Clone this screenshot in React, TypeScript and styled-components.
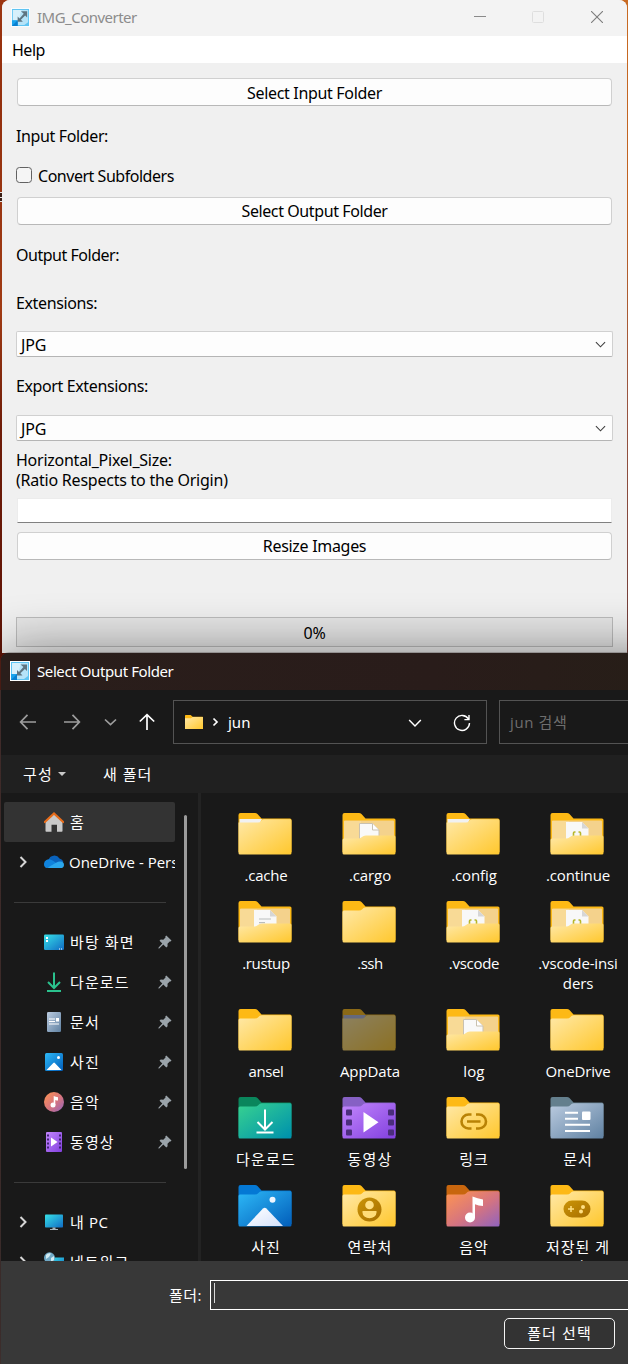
import React from "react";
import styled, { createGlobalStyle } from "styled-components";

const GlobalStyle = createGlobalStyle`
  * { box-sizing: border-box; }
  html, body { margin: 0; padding: 0; }
  body { width: 628px; height: 1364px; overflow: hidden; background: #5a3029; }
`;

const segoe = `"Noto Sans", "Noto Sans CJK KR", sans-serif`;
const malgun = `"Open Sans", "Noto Sans CJK KR", sans-serif`;

/* ---------- desktop ---------- */

const Desktop = styled.main`
  width: 628px;
  height: 1364px;
  overflow: hidden;
  display: flex;
  flex-direction: column;
  background:
    linear-gradient(#c86a22, #c0601f 30%, #9a5540 60%, #6d3a38 100%) right top / 10px 660px no-repeat,
    linear-gradient(#e8e4e2 0 1px, #3a1d14 1px 5px, #e8e4e2 5px 6px, #3a1d14 6px 9px, #e8e4e2 9px) 0 192px / 2px 10px no-repeat,
    linear-gradient(#9c3510, #93300e 15%, #a03b14 45%, #6e1c08 62%, #5c1206 100%) left top / 10px 690px no-repeat,
    linear-gradient(#5e2f2a, #45302e);
`;

const Label = styled.span<{ $ls?: number }>`
  letter-spacing: ${(p) => p.$ls ?? 0}px;
  white-space: nowrap;
`;

/* ---------- converter window ---------- */

const ConverterWindow = styled.section`
  width: 625px;
  height: 653px;
  margin-left: 2px;
  flex: none;
  display: flex;
  flex-direction: column;
  border-radius: 8px 8px 0 0;
  overflow: hidden;
  background: #f0f0f0;
  color: #000;
  font: 16px/20px ${segoe};
`;

const TitleBar = styled.header`
  height: 36px;
  flex: none;
  display: flex;
  align-items: center;
  padding: 0 0 2px 9px;
  background: #f3f3f3;
  color: #8c8c8c;
  font-size: 15px;
`;

const TitleText = styled.span<{ $ls?: number }>`
  flex: 1;
  margin-left: 7px;
  letter-spacing: ${(p) => p.$ls ?? 0}px;
`;

const WindowControls = styled.div`
  display: flex;
  gap: 46px;
  padding-right: 24px;
  svg { display: block; }
  svg:last-child { margin-left: 1px; }
`;

const MenuBar = styled.nav`
  height: 27px;
  flex: none;
  padding: 4px 10px;
  background: #fff;
`;

const Form = styled.div`
  display: flex;
  flex-direction: column;
  padding: 15px 14px 0;
`;

const PushButton = styled.button<{ $top?: number; $drop?: number }>`
  height: 28px;
  margin: ${(p) => p.$top ?? 0}px 1px 0;
  padding: ${(p) => p.$drop ?? 0}px 0 ${(p) => (p.$drop ? 0 : 1)}px;
  border: 1px solid #d0d0d0;
  border-bottom-color: #b8b8b8;
  border-radius: 4px;
  background: #fdfdfd;
  color: #000;
  font: inherit;
`;

const FieldLabel = styled.label<{ $top: number; $ls?: number }>`
  height: 20px;
  margin-top: ${(p) => p.$top}px;
  letter-spacing: ${(p) => p.$ls ?? 0}px;
  white-space: nowrap;
`;

const CheckRow = styled.label`
  display: flex;
  align-items: center;
  gap: 6px;
  height: 20px;
  margin-top: 20px;
`;

const CheckBox = styled.span`
  width: 16px;
  height: 16px;
  margin-top: -2px;
  border: 1px solid #626262;
  border-radius: 3.5px;
  background: #f5f5f5;
`;

const Select = styled.div<{ $top: number }>`
  height: 26px;
  margin-top: ${(p) => p.$top}px;
  display: flex;
  align-items: center;
  justify-content: space-between;
  padding: 1px 6px 0 4px;
  border: 1px solid #d0d0d0;
  border-bottom-color: #b5b5b5;
  border-radius: 2px;
  background: #fdfdfd;
`;

const LineInput = styled.div`
  height: 25px;
  margin: 8px 1px 0;
  border: 1px solid #ececec;
  border-bottom-color: #808080;
  background: #fff;
`;

const Progress = styled.div`
  height: 30px;
  margin-top: 57px;
  padding-top: 5px;
  border: 1px solid #bcbcbc;
  background: #e6e6e6;
  text-align: center;
  letter-spacing: -0.3px;
`;

/* ---------- folder picker ---------- */

const Dialog = styled.section`
  position: relative;
  width: 720px;
  height: 711px;
  margin-left: 1px;
  flex: none;
  display: flex;
  flex-direction: column;
  border-radius: 8px 8px 0 0;
  background: #191919;
  box-shadow: 0 0 0 1px rgba(70, 60, 58, 0.3), 0 0 54px rgba(0, 0, 0, 0.48);
  color: #fff;
  font: 15px/20px ${malgun};
`;

const DialogTitle = styled.header`
  height: 37px;
  flex: none;
  display: flex;
  align-items: center;
  padding: 0 0 1px 9px;
  border-radius: 8px 8px 0 0;
  background: linear-gradient(90deg, #2a1e1b, #291c1a 60%, #271e18 90%);
  font-family: ${segoe};
`;

const NavBar = styled.div`
  height: 65px;
  flex: none;
  display: flex;
  align-items: center;
  padding: 0 0 2px 18px;
`;

const NavButtons = styled.div`
  width: 154px;
  flex: none;
  display: flex;
  svg { display: block; flex: none; }
`;

const AddressBox = styled.div`
  width: 314px;
  height: 44px;
  display: flex;
  align-items: center;
  padding: 0 15px 0 11px;
  border: 1px solid #535353;
  svg { display: block; }
`;

const AddressText = styled.span`
  flex: 1;
  margin-left: -1px;
  font-family: ${segoe};
`;

const AddressActions = styled.span`
  display: flex;
  align-items: center;
  gap: 31px;
  padding-top: 2px;
`;

const SearchBox = styled.div`
  width: 210px;
  height: 44px;
  margin-left: 12px;
  padding: 11px 10px;
  border: 1px solid #535353;
  color: #6e6e6e;
  letter-spacing: 0.6px;
`;

const ToolBar = styled.div`
  height: 38px;
  flex: none;
  display: flex;
  align-items: center;
  padding: 0 0 1px 22px;
  background: #202020;
`;

const Caret = styled.i`
  margin: 0 37px 0 5px;
  border: 4.5px solid transparent;
  border-top-color: #c8c8c8;
  border-bottom: 0;
`;

const Content = styled.div`
  height: 468px;
  flex: none;
  display: flex;
  overflow: hidden;
`;

const Sidebar = styled.aside`
  width: 174px;
  padding: 9px 0 0 3px;
  overflow: hidden;
  flex: none;
`;

const SideRow = styled.div<{ $active?: boolean }>`
  height: 40px;
  display: flex;
  align-items: center;
  border-radius: 2px;
  background: ${(p) => (p.$active ? "#333" : "transparent")};
  svg { display: block; flex: none; }
`;

const ExpandSlot = styled.span`
  width: 40px;
  flex: none;
  padding-left: 13px;
`;

const SideText = styled.span<{ $ls?: number; $gap?: number }>`
  flex: 1;
  margin-left: ${(p) => p.$gap ?? 6}px;
  white-space: nowrap;
  letter-spacing: ${(p) => p.$ls ?? 0}px;
`;

const SideDivider = styled.hr`
  width: 152px;
  height: 1px;
  margin: 20px 0 19px 10px;
  border: 0;
  background: #3a3a3a;
`;

const ScrollTrack = styled.div`
  width: 23px;
  flex: none;
  padding: 22px 0 0 9px;
`;

const ScrollThumb = styled.div`
  width: 3px;
  height: 354px;
  border-radius: 2px;
  background: #9b9b9b;
`;

const Splitter = styled.div`
  width: 3px;
  flex: none;
  background: #232323;
`;

const FileGrid = styled.div`
  display: grid;
  grid-template-columns: repeat(4, 104px);
  align-content: start;
  padding: 20px 0 0 12px;
`;

const FileCell = styled.figure`
  margin: 0;
  padding-bottom: 16px;
  display: flex;
  flex-direction: column;
  align-items: center;
  text-align: center;
  svg { display: block; margin-bottom: 10px; }
`;

const FileName = styled.figcaption<{ $ls: number }>`
  white-space: pre;
  padding-left: 2px;
  letter-spacing: ${(p) => p.$ls}px;
`;

const Footer = styled.footer`
  flex: 1;
  background: #383838;
`;

const FolderRow = styled.div`
  display: flex;
  align-items: center;
  padding: 19px 0 0 168px;
`;

const FolderInput = styled.div`
  width: 500px;
  height: 30px;
  margin-left: 8px;
  padding: 2px 3px;
  border: 1px solid #fff;
`;

const TextCursor = styled.div`
  width: 1px;
  height: 20px;
  background: #d8d8d8;
`;

const ConfirmButton = styled.button`
  display: block;
  width: 111px;
  height: 31px;
  margin: 8px 0 0 503px;
  padding: 0 0 2px;
  border: 1px solid #f4f4f4;
  border-radius: 5px;
  background: #333;
  color: #fff;
  font: inherit;
  letter-spacing: 1.1px;
`;

/* ---------- icons ---------- */

const AppIcon = ({ size }: { size: number }) => (
  <svg width={size} height={size} viewBox="0 0 20 20">
    <rect width="20" height="20" fill="#fff" />
    <rect x="1" y="1" width="18" height="18" fill="#5fc4f2" />
    <path d="M2 2h16v13l-4 3H7V13H2z" fill="#b5e3f8" />
    <path d="M2 2h9L8 13H2z" fill="#d7f0fb" />
    <path d="M1 13h6v6H1z" fill="#1aa3ec" />
    <path d="M7 13v6L1 19z" fill="#087fd0" />
    <path d="M10.5 3.5H17V10l-2.1-2.1-4.5 4.4 2.1 2.2H7V9l2 2 4.4-5z" fill="#5e7480" />
  </svg>
);

const Chevron = ({ dir, size = 12, color = "#fff", w = 1.5 }: { dir: "down" | "right"; size?: number; color?: string; w?: number }) => (
  <svg width={size} height={size} viewBox="0 0 12 12" fill="none" stroke={color} strokeWidth={w}>
    <path d={dir === "down" ? "M1 3.5 6 8.5 11 3.5" : "M3.5 1 8.5 6 3.5 11"} />
  </svg>
);

const Arrow = ({ turn, color }: { turn: number; color: string }) => (
  <svg width="18" height="18" viewBox="0 0 18 18" fill="none" stroke={color} strokeWidth="1.7">
    <path transform={`rotate(${turn} 9 9)`} d="M17 9H1.800M8.500 1.800 1.600 9l6.900 7.200" />
  </svg>
);

const Refresh = () => (
  <svg width="18" height="18" viewBox="0 0 18 18" fill="none" stroke="#fff" strokeWidth="1.4">
    <path d="M15.4 5A7.5 7.5 0 1 0 16.5 9M16 1v4.6h-4.6" />
  </svg>
);

const Pin = () => (
  <svg width="14" height="14" viewBox="0 0 14 14" fill="#9aa3a9">
    <path d="M8.3.5 13.5 5.6l-1 .9-.8-.1-2.2 2.3.1 2.6-1.3 1.2-3-3L1.200 13.600.4 13.400.6 12.600 4.300 8.600 1.500 5.800l1.200-1.200 2.600.1L7.500 2.400l-.2-1z" />
  </svg>
);

const GradientSheet = styled.svg`
  position: absolute;
`;

const Gradients = () => (
  <GradientSheet width="0" height="0">
    <defs>
      {(
        [
          ["yellow", "#ffe7a2", "#ffc933"],
          ["green", "#35cf91", "#0093ac"],
          ["purple", "#bf83fb", "#8543e0"],
          ["slate", "#b7c8dd", "#6485a5"],
          ["blue", "#2bb4f4", "#0462bd"],
          ["teal", "#35dbe6", "#1271c6"],
          ["gold", "#c99207", "#a87000"],
          ["snow", "#ffffff", "#d5e2fb"],
        ] as const
      ).map(([id, a, b]) => (
        <linearGradient key={id} id={id} x1="0" y1="0" x2="1" y2="1">
          <stop offset="0.05" stopColor={a} />
          <stop offset="0.95" stopColor={b} />
        </linearGradient>
      ))}
      <linearGradient id="sunset" x1="0" y1="0" x2="1" y2="1">
        <stop offset="0" stopColor="#ff9550" />
        <stop offset="0.55" stopColor="#d57480" />
        <stop offset="1" stopColor="#9063bf" />
      </linearGradient>
    </defs>
  </GradientSheet>
);

type FolderKind =
  | "plain" | "strip" | "hidden" | "page" | "lines" | "code"
  | "download" | "video" | "link" | "docs" | "picture" | "contact" | "music" | "game";

const tones: Partial<Record<FolderKind, [string, string]>> = {
  download: ["#0a865c", "green"],
  video: ["#8660c4", "purple"],
  docs: ["#647f8d", "slate"],
  picture: ["#0478d4", "blue"],
  music: ["#c8660e", "sunset"],
};

const FolderArt = ({ kind }: { kind: FolderKind }) => {
  switch (kind) {
    case "download":
      return <path d="M27 12.500V33M19.500 25 27 32.500 34.500 25M18.500 35.500h17" stroke="#fff" strokeWidth="2" fill="none" />;
    case "video":
      return (
        <>
          {[13, 23, 33].map((y) => (
            <g key={y} fill="#4b2d7c">
              <rect x="4" y={y - 0.5} width="6" height="6" rx="1" />
              <rect x="46" y={y - 0.5} width="6" height="6" rx="1" />
            </g>
          ))}
          <path d="M21.500 15v20.500L36.500 25.200z" fill="#fff" />
        </>
      );
    case "link":
      return (
        <path d="M25.500 17.500H22.500a7 7 0 0 0 0 14h3M30 17.500h3a7 7 0 0 1 0 14h-3M21 24.500h13.500" fill="none" stroke="#b98205" strokeWidth="2.600" />
      );
    case "docs":
      return (
        <>
          <path d="M15 15.700h13M15 21.700h13M15 27.700h25M15 34h25" stroke="#fff" strokeWidth="2" />
          <rect x="32" y="14.500" width="8.500" height="8.500" rx="1" fill="#fff" />
        </>
      );
    case "picture":
      return (
        <>
          <path d="M8.500 41 25 23.500q1.700-1.700 3.400 0L45 41z" fill="url(#snow)" />
          <circle cx="34.500" cy="14.700" r="3" fill="#eef6ff" />
        </>
      );
    case "contact":
      return (
        <>
          <circle cx="27.500" cy="24.500" r="12" fill="url(#gold)" />
          <circle cx="27.500" cy="20" r="4.300" fill="#ffdf83" />
          <path d="M20.500 26h14v1.500a7 5.800 0 0 1-14 0z" fill="#ffdc78" />
        </>
      );
    case "music":
      return (
        <>
          <circle cx="24" cy="32.500" r="5" fill="#fff" />
          <path d="M26.500 11.500q5 2 10.500 3v6.500q-4.500-.3-8-1.700V33h-2.500z" fill="#fff" />
        </>
      );
    case "game":
      return (
        <>
          <rect x="13.500" y="15.500" width="27" height="17" rx="8.500" fill="url(#gold)" />
          <path d="M18 24h6M21 21v6" stroke="#ffdf83" strokeWidth="1.500" />
          <circle cx="33" cy="22" r="2" fill="#ffdf83" />
          <circle cx="31" cy="26.500" r="2" fill="#ffdf83" />
        </>
      );
    default:
      return null;
  }
};

const Folder = ({ kind }: { kind: FolderKind }) => {
  const [tab, body] = tones[kind] ?? ["#fdb915", "yellow"];
  const open = kind === "page" || kind === "lines" || kind === "code";
  const flat = kind === "strip" || kind === "hidden";
  return (
    <svg width="54" height="42" viewBox="0 0 54 42" opacity={kind === "hidden" ? 0.5 : 1}>
      <path d="M.5 2Q.5 0 2.500 0H17q1.500 0 2.500 1l4 4.600H52q1.500 0 1.500 1.500V39H.5z" fill={tab} />
      {open ? (
        <>
          <rect x="2" y="7.500" width="50" height="30" rx="1" fill="#f4d28c" />
          <path d="M2 8h17v20H2z" fill="#fadf9d" opacity=".6" />
          {kind === "page" ? (
            <path d="M17.500 10.500H30.500l6.500 6.500V28H17.500z" fill="#f9f9f9" stroke="#c9c1b0" />
          ) : (
            <path d="M16 9H32l6.500 6.500V28H16z" fill="#f8f8f8" />
          )}
          {kind === "page" ? (
            <path d="M30.500 10.500V17H37" fill="#fff" stroke="#c9c1b0" />
          ) : (
            <path d="M32 9v6.500h6.500z" fill="#d6d6d6" />
          )}
          {kind === "lines" && <path d="M21 18h12M21 21.700h6" stroke="#b9bdbd" strokeWidth="1.200" />}
          {kind === "code" && <path d="M25.500 19h-1q-1 0-1 1v4M28.500 19h1q1 0 1 1v4" stroke="#b6b62b" strokeWidth="1.600" fill="none" />}
          <path d="M.5 27q0-1.500 1.500-1.500H16q2 0 4-1.500l1.500-.9q1-.6 2.500-.6H52q1.500 0 1.500 1.500V40q0 1.500-1.500 1.500H2Q.5 41.500.5 40z" fill="url(#yellow)" />
        </>
      ) : flat ? (
        <>
          <path d="M1.500 6H24L21 12H1.500z" fill={kind === "hidden" ? "#aeb9e0" : "#f1f1f1"} />
          <path d="M.5 9.500H20q2 0 3-1.500 1-1.700 3-1.700H52q1.500 0 1.500 1.500V40q0 1.500-1.500 1.500H2Q.5 41.500.5 40z" fill={`url(#${body})`} />
        </>
      ) : (
        <path d="M.5 11q0-1.500 1.500-1.500H17q2 0 3.500-1.500l1-1q1-.8 2.500-.8H52q1.500 0 1.500 1.500V40q0 1.500-1.500 1.500H2Q.5 41.500.5 40z" fill={`url(#${body})`} />
      )}
      <FolderArt kind={kind} />
    </svg>
  );
};

type SideKind = "home" | "cloud" | "desktop" | "download" | "docs" | "picture" | "music" | "video" | "pc" | "network";

const SideArt: Record<SideKind, React.ReactNode> = {
  home: (
    <>
      <path d="M1.500 9.500 10 2l8.500 7.500V19q0 .8-.8.8H13v-7H7.500v7H2.300q-.8 0-.8-.8z" fill="#c9c9c9" />
      <path d="M.8 10 10 1.500 19.200 10" fill="none" stroke="#e66c1b" strokeWidth="2.200" strokeLinecap="round" />
    </>
  ),
  cloud: (
    <>
      <path d="M4.500 8a6 5.800 0 0 1 11-1.500q3 .5 4 3.500L10 13z" fill="#0a62bb" />
      <path d="M0 12.200A5 4.600 0 0 1 7.500 8q1.500.6 6 4L3 16Q0 15.500 0 12.200z" fill="#1083dd" />
      <path d="M3 16 12 10.700q2.500-1.500 4.500-1.300 3.500.4 3.500 3.500 0 3.100-3.500 3.100H4z" fill="#2aa7ee" />
    </>
  ),
  desktop: (
    <>
      <rect x="0" y="2.500" width="20" height="15.500" rx="1.200" fill="url(#teal)" />
      <path d="M2 5h2v2H2zM2 8h2v2H2z" fill="#fff" />
      <path d="M15 17h1M17 17h1" stroke="#fff" />
    </>
  ),
  download: <path d="M10 .5V15M4 10l6 6 6-6M3 19h14" fill="none" stroke="#2ac18d" strokeWidth="2" />,
  docs: (
    <>
      <rect x="3" y="0" width="14" height="20" rx="1.300" fill="url(#slate)" />
      <path d="M5 7h6M5 9.500h6M5 12h10" stroke="#fff" strokeWidth="1.200" />
      <rect x="12" y="6" width="3" height="3.500" fill="#fff" />
    </>
  ),
  picture: (
    <>
      <rect x="1" y="1" width="18" height="18" rx="1.500" fill="url(#blue)" />
      <path d="m2.500 18 6.800-7q.8-.8 1.500 0l6.700 7z" fill="#fff" />
      <circle cx="14.500" cy="5.500" r="1.500" fill="#fff" />
    </>
  ),
  music: (
    <>
      <circle cx="10" cy="10" r="10" fill="url(#sunset)" />
      <circle cx="9" cy="13" r="2.500" fill="#fff" />
      <path d="M9.700 4q2 1 4.300 1.200V8.500q-1.500 0-2.700-.6V13H9.700z" fill="#fff" />
    </>
  ),
  video: (
    <>
      <rect x="2" y="0" width="16" height="20" rx="1" fill="url(#purple)" />
      <path d="M4 2.500v16M16 2.500v16" stroke="#412373" strokeWidth="2" strokeDasharray="2 2" />
      <path d="M7 5.500v9L13.500 10z" fill="#fff" />
    </>
  ),
  pc: (
    <>
      <rect x="1" y="2.500" width="18" height="13" rx=".8" fill="url(#teal)" />
      <path d="M8.500 15.500h3V17H14v1H6v-1h2.500z" fill="#a8b4bb" />
    </>
  ),
  network: (
    <>
      <rect x="6" y="5.500" width="14" height="11" fill="url(#teal)" />
      <circle cx="5.500" cy="5.800" r="5.500" fill="#6fa9c6" />
      <path d="M2 3q2-2.500 5-1.500L5 5 2 7zM7 6l3-2v4l-3 2z" fill="#d1eaf2" />
    </>
  ),
};

const SideIcon = ({ kind }: { kind: SideKind }) => (
  <svg width="20" height="20" viewBox="0 0 20 20">{SideArt[kind]}</svg>
);

const PinSlot = styled.span`
  padding-right: 3px;
`;

/* ---------- data ---------- */

const pinned: [SideKind, string][] = [
  ["desktop", "바탕 화면"],
  ["download", "다운로드"],
  ["docs", "문서"],
  ["picture", "사진"],
  ["music", "음악"],
  ["video", "동영상"],
];

const files: [FolderKind, string, number][] = [
  ["strip", ".cache", -0.25],
  ["page", ".cargo", -0.1],
  ["strip", ".config", -0.1],
  ["code", ".continue", -0.15],
  ["lines", ".rustup", -0.4],
  ["plain", ".ssh", -0.5],
  ["code", ".vscode", -0.3],
  ["code", ".vscode-insi\nders", -0.15],
  ["plain", "ansel", -0.4],
  ["hidden", "AppData", -0.1],
  ["page", "log", 0.1],
  ["plain", "OneDrive", -0.15],
  ["download", "다운로드", 1.2],
  ["video", "동영상", 1.2],
  ["link", "링크", 1],
  ["docs", "문서", 1],
  ["picture", "사진", 1],
  ["contact", "연락처", 1.2],
  ["music", "음악", 1],
  ["game", "저장된 게\n임", 1],
];

export default function App() {
  return (
    <Desktop>
      <GlobalStyle />
      <Gradients />
      <ConverterWindow>
        <TitleBar>
          <AppIcon size={19} />
          <TitleText $ls={-0.52}>IMG_Converter</TitleText>
          <WindowControls>
            <svg width="12" height="12" viewBox="0 0 12 12"><path d="M0 5.500h12" stroke="#8a8a8a" /></svg>
            <svg width="12" height="12" viewBox="0 0 12 12"><rect x=".5" y=".5" width="11" height="11" rx="1" fill="none" stroke="#dedede" /></svg>
            <svg width="12" height="12" viewBox="0 0 12 12"><path d="M0 0l12 12M12 0 0 12" stroke="#7c7c7c" strokeWidth="1.1" /></svg>
          </WindowControls>
        </TitleBar>
        <MenuBar><Label $ls={-0.5}>Help</Label></MenuBar>
        <Form>
          <PushButton $drop={1}><Label $ls={-0.32}>Select Input Folder</Label></PushButton>
          <FieldLabel $top={20} $ls={-0.37}>Input Folder:</FieldLabel>
          <CheckRow><CheckBox /><Label $ls={-0.47}>Convert Subfolders</Label></CheckRow>
          <PushButton $top={11}><Label $ls={-0.4}>Select Output Folder</Label></PushButton>
          <FieldLabel $top={20} $ls={-0.48}>Output Folder:</FieldLabel>
          <FieldLabel $top={28} $ls={-0.38}>Extensions:</FieldLabel>
          <Select $top={18}><Label $ls={-0.2}>JPG</Label><Chevron dir="down" size={11} color="#3f3f3f" w={1.2} /></Select>
          <FieldLabel $top={19} $ls={-0.38}>Export Extensions:</FieldLabel>
          <Select $top={19}><Label $ls={-0.2}>JPG</Label><Chevron dir="down" size={11} color="#3f3f3f" w={1.2} /></Select>
          <FieldLabel $top={9} $ls={-0.25}>Horizontal_Pixel_Size:</FieldLabel>
          <FieldLabel $top={0} $ls={-0.23}>(Ratio Respects to the Origin)</FieldLabel>
          <LineInput />
          <PushButton $top={9}><Label $ls={-0.3}>Resize Images</Label></PushButton>
          <Progress>0%</Progress>
        </Form>
      </ConverterWindow>

      <Dialog>
        <DialogTitle>
          <AppIcon size={20} />
          <TitleText $ls={-0.4}>Select Output Folder</TitleText>
        </DialogTitle>
        <NavBar>
          <NavButtons>
            <Arrow turn={0} color="#9d9d9d" />
            <svg width="26" height="18" />
            <Arrow turn={180} color="#9d9d9d" />
            <svg width="57" height="18" viewBox="0 0 57 18"><path d="m24 6.500 5.500 5.200L35 6.500" fill="none" stroke="#9d9d9d" strokeWidth="1.700" /></svg>
            <Arrow turn={90} color="#fff" />
          </NavButtons>
          <AddressBox>
            <svg width="18" height="14" viewBox="0 0 54 42">
              <path d="M0 2Q0 0 2 0H17l6 5.500H53V20H0z" fill="#fdb915" />
              <path d="M0 10H18l5-4H54V42H0z" fill="url(#yellow)" />
            </svg>
            <svg width="26" height="12" viewBox="0 0 26 12"><path d="m10.500 2.500 3.500 3.500-3.500 3.500" fill="none" stroke="#fff" strokeWidth="1.700" /></svg>
            <AddressText>jun</AddressText>
            <AddressActions>
              <Chevron dir="down" size={14} w={1.3} />
              <Refresh />
            </AddressActions>
          </AddressBox>
          <SearchBox>jun 검색</SearchBox>
        </NavBar>
        <ToolBar>
          <Label $ls={1.2}>구성</Label>
          <Caret />
          <Label $ls={1}>새 폴더</Label>
        </ToolBar>
        <Content>
          <Sidebar>
            <SideRow $active>
              <ExpandSlot />
              <SideIcon kind="home" />
              <SideText>홈</SideText>
            </SideRow>
            <SideRow>
              <ExpandSlot><Chevron dir="right" color="#d6d6d6" w={2} /></ExpandSlot>
              <SideIcon kind="cloud" />
              <SideText $gap={5}>OneDrive - Personal</SideText>
            </SideRow>
            <SideDivider />
            {pinned.map(([kind, name]) => (
              <SideRow key={name}>
                <ExpandSlot />
                <SideIcon kind={kind} />
                <SideText $ls={1.1}>{name}</SideText>
                <PinSlot><Pin /></PinSlot>
              </SideRow>
            ))}
            <SideDivider />
            <SideRow>
              <ExpandSlot><Chevron dir="right" color="#d6d6d6" w={2} /></ExpandSlot>
              <SideIcon kind="pc" />
              <SideText $ls={0.6}>내 PC</SideText>
            </SideRow>
            <SideRow>
              <ExpandSlot><Chevron dir="right" color="#d6d6d6" w={2} /></ExpandSlot>
              <SideIcon kind="network" />
              <SideText $ls={1}>네트워크</SideText>
            </SideRow>
          </Sidebar>
          <ScrollTrack><ScrollThumb /></ScrollTrack>
          <Splitter />
          <FileGrid>
            {files.map(([kind, name, ls]) => (
              <FileCell key={name}>
                <Folder kind={kind} />
                <FileName $ls={ls}>{name}</FileName>
              </FileCell>
            ))}
          </FileGrid>
        </Content>
        <Footer>
          <FolderRow>
            <Label $ls={0.5}>폴더:</Label>
            <FolderInput><TextCursor /></FolderInput>
          </FolderRow>
          <ConfirmButton>폴더 선택</ConfirmButton>
        </Footer>
      </Dialog>
    </Desktop>
  );
}
